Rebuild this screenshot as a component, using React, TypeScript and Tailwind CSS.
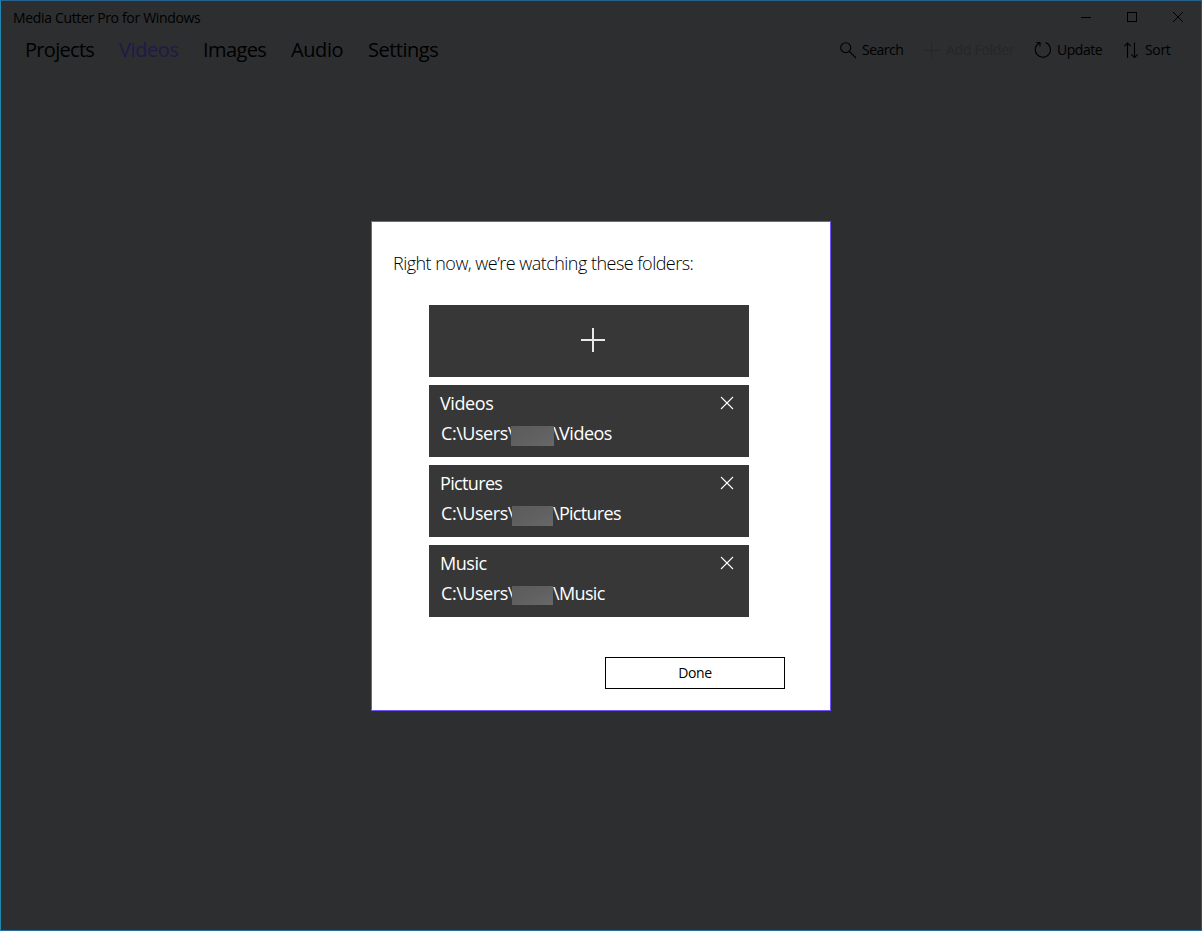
import React from "react";

interface Folder {
    name: string;
    tail: string;
    nameStyle: string;
    tailStyle: string;
    mask: string;
}

const navItems = [
    { label: "Projects", style: "w-[94px] tracking-[-0.7px]" },
    { label: "Videos", style: "w-[84px] tracking-[-0.4px] text-[#1f1a46]" },
    { label: "Images", style: "w-[88px] tracking-[-0.6px]" },
    { label: "Audio", style: "w-[77px] tracking-[-0.4px]" },
    { label: "Settings", style: "w-[80px] tracking-[-0.5px]" },
];

const folders: Folder[] = [
    {
        name: "Videos",
        tail: "\\Videos",
        nameStyle: "tracking-[-0.4px]",
        tailStyle: "tracking-[-0.5px]",
        mask: "-ml-px w-[43px] h-5",
    },
    {
        name: "Pictures",
        tail: "\\Pictures",
        nameStyle: "tracking-[-0.65px]",
        tailStyle: "tracking-[-0.7px]",
        mask: "mr-px w-[41px] h-5",
    },
    {
        name: "Music",
        tail: "\\Music",
        nameStyle: "tracking-[-0.45px]",
        tailStyle: "tracking-[-0.65px]",
        mask: "mr-px w-[41px] h-[19px]",
    },
];

// specks of the window behind, visible along the top border
const specks = [
    "left-[322px] w-[5px] bg-[#b5b3a6]",
    "left-[345px] w-[2px] bg-[#b5b3a6]",
    "left-[361px] w-[2px] bg-[#a07a55]",
    "left-[366px] w-px bg-[#a3a69c]",
    "left-[369px] w-px bg-[#a07a55]",
    "left-[373px] w-px bg-[#a3a69c]",
    "left-[398px] w-[2px] bg-[#a07a55]",
    "left-[407px] w-px bg-[#b5b3a6]",
    "left-[420px] w-px bg-[#a07a55]",
    "left-[424px] w-px bg-[#b5b3a6]",
    "left-[437px] w-[4px] bg-[#b5b3a6]",
];

function WindowControls() {
    return (
        <div className="flex h-full">
            <div className="flex w-[46px] items-center justify-center">
                <svg width="10" height="10" viewBox="0 0 10 10" className="mt-px">
                    <path d="M0 4.5h10" stroke="#000" />
                </svg>
            </div>
            <div className="flex w-[46px] items-center justify-center">
                <svg width="10" height="10" viewBox="0 0 10 10">
                    <rect x="0.5" y="0.5" width="9" height="9" fill="none" stroke="#000" />
                </svg>
            </div>
            <div className="flex w-[46px] items-center justify-center">
                <svg width="10" height="10" viewBox="0 0 10 10">
                    <path d="M0 0l10 10M10 0L0 10" stroke="#000" fill="none" />
                </svg>
            </div>
        </div>
    );
}

function SearchIcon() {
    return (
        <svg width="17" height="17" viewBox="0 0 17 17" fill="none" stroke="#000" strokeWidth="1.1">
            <circle cx="5.7" cy="5.7" r="5" />
            <path d="M9.3 9.3l6.7 6.7" />
        </svg>
    );
}

function AddIcon() {
    return (
        <svg width="16" height="16" viewBox="0 0 16 16" fill="none" stroke="#262729">
            <path d="M0 8.5h16M7.5 0v16" />
        </svg>
    );
}

function UpdateIcon() {
    return (
        <svg width="18" height="18" viewBox="0 0 18 18" fill="none" stroke="#000" strokeWidth="1.1">
            <path d="M11.5 1.5A7.6 7.6 0 1 1 5.8 1.7" />
            <path d="M2.5 1.5h3.5v4" />
        </svg>
    );
}

function SortIcon() {
    return (
        <svg width="15" height="17" viewBox="0 0 15 17" fill="none" stroke="#000" strokeWidth="1.1">
            <path d="M3.5 16V1M0.3 4.2L3.5 1l3.2 3.2" />
            <path d="M10.5 0.5v15M7.3 12.3l3.2 3.2 3.2-3.2" />
        </svg>
    );
}

function FolderCard({ folder }: { folder: Folder }) {
    return (
        <div className="h-[72px] bg-[#373737] pl-[11px] pr-[15px] text-[18px] leading-[22px] text-white">
            <div className="flex h-[37px] items-center justify-between">
                <span className={`mb-0.5 ${folder.nameStyle}`}>{folder.name}</span>
                <svg width="14" height="14" viewBox="0 0 14 14" fill="none" stroke="#fff" strokeWidth="1.1" className="mb-0.5">
                    <path d="M1 1l12 12M13 1L1 13" />
                </svg>
            </div>
            <div className="flex h-6 pl-px whitespace-nowrap">
                <span className="w-[71px] tracking-[-0.45px]">C:\Users\</span>
                <span
                    className={`relative z-10 mt-1 shrink-0 bg-linear-to-br from-[#5b5b5b] via-[#606060] to-[#686868] ${folder.mask}`}
                />
                <span className={`-ml-px ${folder.tailStyle}`}>{folder.tail}</span>
            </div>
        </div>
    );
}

export default function App() {
    return (
        <div className="relative h-[931px] w-[1202px] overflow-hidden border border-t-[#28628d] border-r-[#28508e] border-b-[#286fa0] border-l-[#2187b0] bg-[#2d2e30] font-['Open_Sans','Noto_Sans',sans-serif] text-black">
            <div className="absolute -top-px -left-px h-px w-full">
                {specks.map((speck) => (
                    <span key={speck} className={`absolute top-0 h-px ${speck}`} />
                ))}
            </div>

            <header>
                <div className="flex h-8 items-center justify-between pl-3">
                    <span className="mt-0.5 text-[14px] leading-5 tracking-[-0.34px]">
                        Media Cutter Pro for Windows
                    </span>
                    <WindowControls />
                </div>
                <div className="flex h-[34px] items-center justify-between pl-6">
                    <nav className="flex text-[20px] leading-7">
                        {navItems.map((item) => (
                            <span key={item.label} className={item.style}>
                                {item.label}
                            </span>
                        ))}
                    </nav>
                    <div className="flex items-center text-[14px] leading-5">
                        <div className="flex w-[84px] items-center gap-[5px]">
                            <SearchIcon />
                            <span className="tracking-[-0.5px]">Search</span>
                        </div>
                        <div className="flex w-[110px] items-center gap-[6px] text-[#262729]">
                            <AddIcon />
                            <span className="tracking-[-0.25px]">Add Folder</span>
                        </div>
                        <div className="flex w-[90px] items-center gap-[5px]">
                            <UpdateIcon />
                            <span className="tracking-[-0.45px]">Update</span>
                        </div>
                        <div className="flex w-[77px] items-center gap-[6px]">
                            <SortIcon />
                            <span className="tracking-[-0.35px]">Sort</span>
                        </div>
                    </div>
                </div>
            </header>

            <main className="mx-auto mt-[154px] h-[490px] w-[460px] border border-[#6f55f2] bg-white">
                <h1 className="pt-7 pl-[21px] text-[18px] leading-[26px] font-light tracking-[-0.53px]">
                    Right now, we’re watching these folders:
                </h1>
                <div className="mt-[29px] ml-[57px] flex w-80 flex-col gap-2">
                    <button className="flex h-[72px] items-center justify-center bg-[#373737] pl-2">
                        <svg width="24" height="24" viewBox="0 0 24 24" stroke="#e8e8e8" strokeWidth="2" className="-mt-0.5">
                            <path d="M0 12h24M12 0v24" />
                        </svg>
                    </button>
                    {folders.map((folder) => (
                        <FolderCard key={folder.name} folder={folder} />
                    ))}
                </div>
                <button className="mt-10 ml-[233px] h-8 w-[180px] border border-black text-[14px] leading-5 tracking-[-0.35px]">
                    Done
                </button>
            </main>
        </div>
    );
}
